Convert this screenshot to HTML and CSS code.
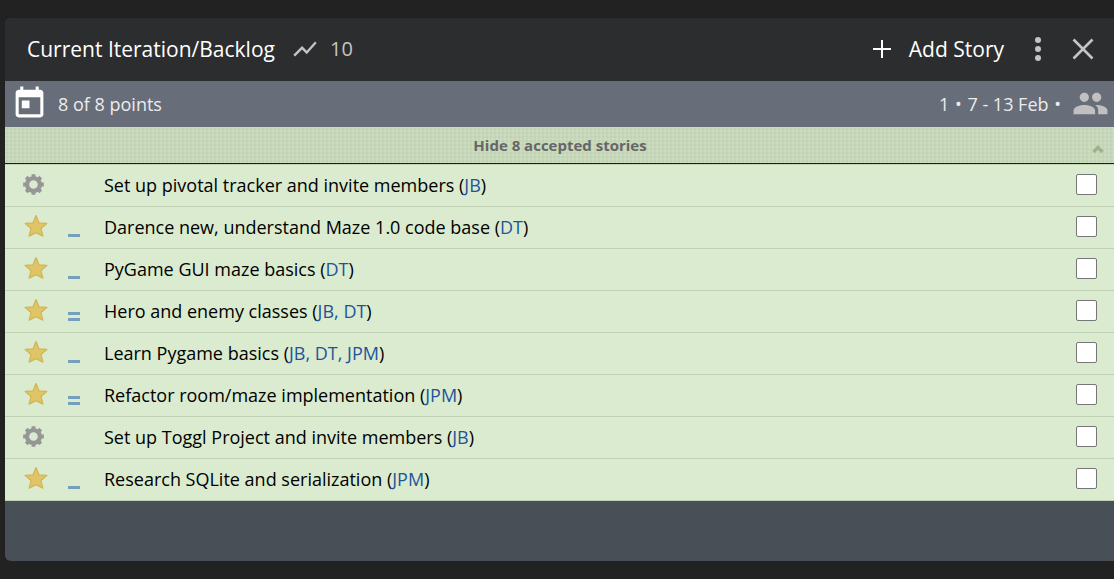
FILE: index.html
```html
<!DOCTYPE html>
<html lang="en">
<head>
<meta charset="utf-8">
<title>Current Iteration/Backlog</title>
<link rel="stylesheet" href="styles.css">
</head>
<body>
<svg class="sprite" aria-hidden="true">
  <symbol id="star" viewBox="0 0 24 24">
    <path d="M12 1.6 15 8.9 22.8 9.5 16.9 14.6 18.9 22.2 12 18.6 5.1 22.2 7.1 14.6 1.2 9.5 9 8.9Z" fill="#dfc565" stroke="#d2b657" stroke-width="1.3" stroke-linejoin="round"/>
  </symbol>
  <symbol id="gear" viewBox="0 0 24 24">
    <g fill="none" stroke="#969696">
      <circle cx="12" cy="12" r="6.7" stroke-width="4.4"/>
      <path d="M12 1.2v3M12 19.8v3M1.2 12h3M19.8 12h3M4.4 4.4l2 2M17.6 17.6l2 2M4.4 19.6l2-2M17.6 6.4l2-2" stroke-width="4"/>
    </g>
  </symbol>
</svg>
<main class="panel">
  <header class="panel-header">
    <h1 class="title">Current Iteration/Backlog</h1>
    <div class="velocity">
      <svg class="icon-chart" viewBox="0 0 24 24"><path fill="#c4c4c4" d="M3.5 18.49l6-6.01 4 4L22 6.92l-1.41-1.41-7.09 7.97-4-4L2 16.99z"/></svg>
      <span>10</span>
    </div>
    <button class="add" type="button">
      <svg class="icon-add" viewBox="0 0 18 18"><path d="M9 0v18M0 9h18" stroke="#fff" stroke-width="2"/></svg>
      <span class="add-label">Add Story</span>
    </button>
    <button class="menu" type="button" aria-label="Panel menu">
      <svg class="icon-menu" viewBox="0 0 6 24"><g fill="#c4c4c4"><circle cx="3" cy="3" r="3"/><circle cx="3" cy="12" r="3"/><circle cx="3" cy="21" r="3"/></g></svg>
    </button>
    <button class="close" type="button" aria-label="Close panel">
      <svg class="icon-close" viewBox="0 0 22 22"><path d="M1.5 1.5l19 19M20.5 1.5l-19 19" stroke="#c4c4c4" stroke-width="2.6"/></svg>
    </button>
  </header>
  <section class="iteration">
    <svg class="icon-large" viewBox="0 0 24 24"><path fill="#fff" d="M19 3h-1V1h-2v2H8V1H6v2H5c-1.11 0-1.99.9-1.99 2L3 19c0 1.1.89 2 2 2h14c1.1 0 2-.9 2-2V5c0-1.1-.9-2-2-2zm0 16H5V8h14v11zM7 10h5v5H7v-5z"/></svg>
    <span class="points">8 of 8 points</span>
    <span class="dates">1 <span class="dot">•</span> 7 - 13 Feb <span class="dot">•</span></span>
    <svg class="icon-large" viewBox="0 0 24 24"><path fill="#c0c0c0" d="M16 11c1.66 0 2.99-1.34 2.99-3S17.66 5 16 5s-3 1.34-3 3 1.34 3 3 3zm-8 0c1.66 0 2.99-1.34 2.99-3S9.66 5 8 5 5 6.34 5 8s1.34 3 3 3zm0 2c-2.33 0-7 1.17-7 3.5V19h14v-2.5C15 14.17 10.33 13 8 13zm8 0c-.29 0-.62.02-.97.05 1.16.84 1.97 1.97 1.97 3.45V19h6v-2.5c0-2.33-4.67-3.5-7-3.5z"/></svg>
  </section>
  <button class="toggle" type="button">
    <span class="toggle-label">Hide 8 accepted stories</span>
    <svg class="icon-up" viewBox="0 0 12 8"><path d="M1.5 7 6 2.5 10.5 7" fill="none" stroke="#9bb38c" stroke-width="3.4"/></svg>
  </button>
  <ul class="stories">
    <li class="story">
      <svg class="type gear"><use href="#gear"/></svg>
      <span class="estimate"></span>
      <label class="name" for="s1">Set up pivotal tracker and invite members (<a href="#jb">JB</a>)</label>
      <input class="check" type="checkbox" id="s1">
    </li>
    <li class="story">
      <svg class="type"><use href="#star"/></svg>
      <span class="estimate"><i></i></span>
      <label class="name" for="s2">Darence new, understand Maze 1.0 code base (<a href="#dt">DT</a>)</label>
      <input class="check" type="checkbox" id="s2">
    </li>
    <li class="story">
      <svg class="type"><use href="#star"/></svg>
      <span class="estimate"><i></i></span>
      <label class="name" for="s3">PyGame GUI maze basics (<a href="#dt">DT</a>)</label>
      <input class="check" type="checkbox" id="s3">
    </li>
    <li class="story">
      <svg class="type"><use href="#star"/></svg>
      <span class="estimate"><i></i><i></i></span>
      <label class="name" for="s4">Hero and enemy classes (<a href="#jb">JB, </a><a href="#dt">DT</a>)</label>
      <input class="check" type="checkbox" id="s4">
    </li>
    <li class="story">
      <svg class="type"><use href="#star"/></svg>
      <span class="estimate"><i></i></span>
      <label class="name" for="s5">Learn Pygame basics (<a href="#jb">JB, </a><a href="#dt">DT, </a><a href="#jpm">JPM</a>)</label>
      <input class="check" type="checkbox" id="s5">
    </li>
    <li class="story">
      <svg class="type"><use href="#star"/></svg>
      <span class="estimate"><i></i><i></i></span>
      <label class="name" for="s6">Refactor room/maze implementation (<a href="#jpm">JPM</a>)</label>
      <input class="check" type="checkbox" id="s6">
    </li>
    <li class="story">
      <svg class="type gear"><use href="#gear"/></svg>
      <span class="estimate"></span>
      <label class="name" for="s7">Set up Toggl Project and invite members (<a href="#jb">JB</a>)</label>
      <input class="check" type="checkbox" id="s7">
    </li>
    <li class="story">
      <svg class="type"><use href="#star"/></svg>
      <span class="estimate"><i></i></span>
      <label class="name" for="s8">Research SQLite and serialization (<a href="#jpm">JPM</a>)</label>
      <input class="check" type="checkbox" id="s8">
    </li>
  </ul>
</main>
</body>
</html>
```
FILE: styles.css
```css
* {
  box-sizing: border-box;
}

body {
  margin: 0;
  min-height: 100vh;
  padding: 18px 0 18px 5px;
  display: flex;
  flex-direction: column;
  background: #222;
  color: #000;
  font-family: "Open Sans", "Noto Sans", sans-serif;
  font-size: 18px;
  line-height: 24px;
}

button {
  padding: 0;
  border: 0;
  background: none;
  color: inherit;
  font: inherit;
  cursor: pointer;
}

svg {
  display: block;
  flex: none;
}

.sprite {
  position: absolute;
  width: 0;
  height: 0;
}

.panel {
  flex: 1;
  display: flex;
  flex-direction: column;
  background: #484f57;
  border-radius: 6px 0 0 6px;
  overflow: hidden;
}

.panel-header {
  display: flex;
  align-items: center;
  padding: 16px 20px 18px 22px;
  background: #2c2d2e;
  color: #fff;
  font-size: 21px;
  line-height: 28px;
}

.title {
  margin: 0;
  padding-top: 1px;
  font-size: inherit;
  font-weight: 400;
}

.velocity {
  display: flex;
  align-items: center;
  gap: 11px;
  margin: 0 auto 0 16px;
  color: #c4c4c4;
  font-size: 20px;
}

.icon-chart {
  width: 28px;
  height: 28px;
}

.add {
  display: flex;
  align-items: center;
  gap: 18px;
}

.add-label {
  padding-top: 1px;
}

.icon-add {
  width: 18px;
  height: 18px;
}

.menu {
  margin: 0 31px;
}

.icon-menu {
  width: 6px;
  height: 24px;
}

.icon-close {
  width: 22px;
  height: 22px;
}

.iteration {
  display: flex;
  align-items: center;
  padding: 4px 5px 5px 6px;
  background: #676d79;
  color: #ececec;
}

.icon-large {
  width: 37px;
  height: 37px;
}

.points {
  margin: 0 auto 0 10px;
}

.dates {
  margin-right: 10px;
}

.dot {
  margin: 0 1px;
}

.toggle {
  display: flex;
  align-items: center;
  padding: 7px 10px 6px 23px;
  border-bottom: 1px solid #1c2114;
  background: radial-gradient(circle, #c1d3b3 1px, #ccdcc0 2px) 0 0 / 4px 4px;
  color: #666;
  font-size: 15px;
  font-weight: 700;
  line-height: 23px;
}

.toggle-label {
  flex: 1;
}

.icon-up {
  width: 12px;
  height: 8px;
  margin-top: 6px;
}

.stories {
  margin: 0;
  padding: 0;
  border-top: 1px solid #c2d4b4;
  list-style: none;
}

.story {
  display: flex;
  align-items: flex-start;
  padding: 7px 17px 8px;
  border-bottom: 1px solid #c0d1b3;
  background: #daebcf;
}

.type {
  width: 24px;
  height: 24px;
  margin: 0 20px 0 2px;
}

.gear {
  width: 23px;
  height: 23px;
  margin: 1px 23px 0 0;
}

.estimate {
  display: flex;
  flex-direction: column;
  align-self: flex-end;
  gap: 3px;
  width: 12px;
  margin: 0 24px 3px 0;
}

.estimate i {
  height: 3px;
  background: #769fbd;
}

.name {
  flex: 1;
  padding-top: 1px;
  line-height: 25px;
}

.name a {
  color: #1f5499;
  text-decoration: none;
}

.check {
  appearance: none;
  width: 21px;
  height: 21px;
  margin: 2px 0 0;
  border: 1px solid #767676;
  border-radius: 2px;
  background: #fff;
}
```
